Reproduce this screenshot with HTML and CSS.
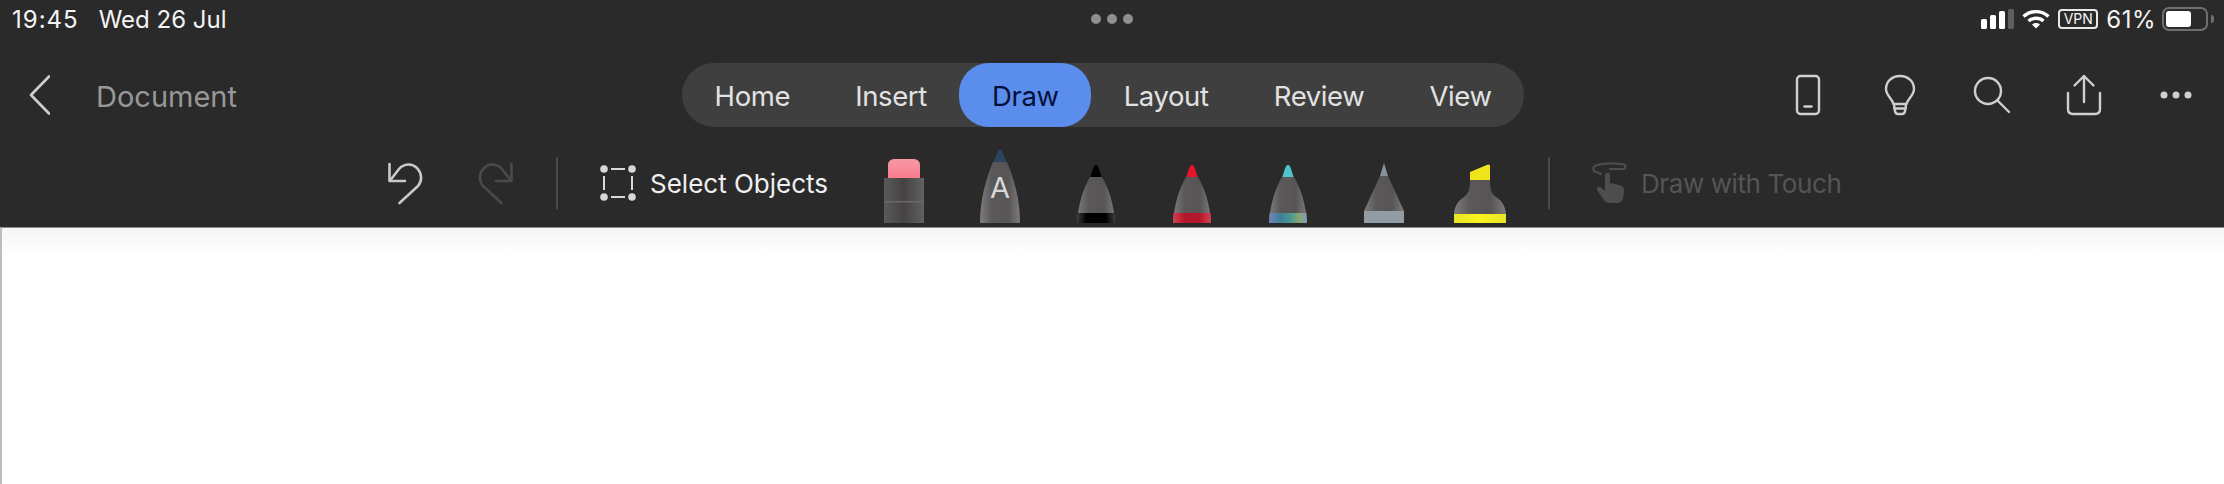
FILE: index.html
```html
<!DOCTYPE html>
<html lang="en">
<head>
    <meta charset="UTF-8">
    <title>Document</title>
    <link rel="stylesheet" href="styles.css">
</head>
<body>

    <svg class="defs" aria-hidden="true">
        <defs>
            <linearGradient id="barrel" x1="0" x2="1" y1="0" y2="0">
                <stop offset="0" stop-color="#807b7c"/>
                <stop offset="0.3" stop-color="#5a5859"/>
                <stop offset="0.7" stop-color="#565455"/>
                <stop offset="1" stop-color="#7f7a7b"/>
            </linearGradient>
            <linearGradient id="eraser-body" x1="0" x2="1" y1="0" y2="0">
                <stop offset="0" stop-color="#5c595a"/>
                <stop offset="0.5" stop-color="#444243"/>
                <stop offset="1" stop-color="#626061"/>
            </linearGradient>
            <linearGradient id="pink" x1="0" x2="0" y1="0" y2="1">
                <stop offset="0" stop-color="#f59aa5"/>
                <stop offset="1" stop-color="#fb7c8e"/>
            </linearGradient>
            <linearGradient id="ink-band" x1="0" x2="1" y1="0" y2="0">
                <stop offset="0" stop-color="#3a3a3a"/>
                <stop offset="0.25" stop-color="#000"/>
                <stop offset="0.75" stop-color="#000"/>
                <stop offset="1" stop-color="#3a3a3a"/>
            </linearGradient>
            <linearGradient id="red-band" x1="0" x2="1" y1="0" y2="0">
                <stop offset="0" stop-color="#d8404f"/>
                <stop offset="0.3" stop-color="#b2182a"/>
                <stop offset="0.7" stop-color="#b2182a"/>
                <stop offset="1" stop-color="#d8404f"/>
            </linearGradient>
            <linearGradient id="galaxy-band" x1="0" x2="1" y1="0" y2="0">
                <stop offset="0" stop-color="#6f86b5"/>
                <stop offset="0.3" stop-color="#3d7f98"/>
                <stop offset="0.6" stop-color="#4f9a90"/>
                <stop offset="0.8" stop-color="#8ea56c"/>
                <stop offset="1" stop-color="#7d9cc4"/>
            </linearGradient>
            <linearGradient id="yellow-band" x1="0" x2="1" y1="0" y2="0">
                <stop offset="0" stop-color="#e8e42a"/>
                <stop offset="0.5" stop-color="#fbf41a"/>
                <stop offset="1" stop-color="#e8e42a"/>
            </linearGradient>
        </defs>
    </svg>

    <div class="status-bar">
        <div class="status-left">
            <span class="clock">19:45</span>
            <span>Wed 26 Jul</span>
        </div>
        <div class="status-dots"><i></i><i></i><i></i></div>
        <div class="status-right">
            <svg class="signal" width="33" height="20" viewBox="0 0 33 20">
                <rect x="0" y="10" width="6" height="10" rx="1.5" fill="#fff"/>
                <rect x="9" y="6" width="6" height="14" rx="1.5" fill="#fff"/>
                <rect x="18" y="2" width="6" height="18" rx="1.5" fill="#fff"/>
                <rect x="27" y="0" width="6" height="20" rx="1.5" fill="#5e5e5e"/>
            </svg>
            <svg class="wifi" width="28" height="20" viewBox="0 0 28 20" fill="none" stroke="#fff" stroke-width="3.4">
                <path d="M1.5 7.5C8.5 1 19.5 1 26.5 7.5"/>
                <path d="M6.5 12C10.5 8.4 17.5 8.4 21.5 12"/>
                <path d="M14 19.5L10 15.6C12 13.6 16 13.6 18 15.6Z" fill="#fff" stroke="none"/>
            </svg>
            <span class="vpn">VPN</span>
            <span class="battery-level">61%</span>
            <span class="battery"><i></i></span>
            <span class="battery-nub"></span>
        </div>
    </div>

    <div class="nav-bar">
        <div class="nav-left">
            <svg width="21" height="40" viewBox="0 0 21 40" fill="none" stroke="#cfcfcf" stroke-width="2.6" stroke-linecap="round" stroke-linejoin="round">
                <path d="M20 1.5L2 20L20 38.5"/>
            </svg>
            <span class="doc-title">Document</span>
        </div>
        <div class="tabs">
            <span class="tab">Home</span>
            <span class="tab">Insert</span>
            <span class="tab active">Draw</span>
            <span class="tab">Layout</span>
            <span class="tab">Review</span>
            <span class="tab">View</span>
        </div>
        <div class="actions">
            <span class="action">
                <svg width="26" height="42" viewBox="0 0 26 42" fill="none" stroke="#cfcfcf" stroke-width="2.4" stroke-linecap="round">
                    <rect x="2" y="2" width="22" height="38" rx="3.5"/>
                    <path d="M9.500 32.500H16.500"/>
                </svg>
            </span>
            <span class="action">
                <svg width="32" height="42" viewBox="0 0 32 42" fill="none" stroke="#cfcfcf" stroke-width="2.4" stroke-linecap="round" stroke-linejoin="round">
                    <path d="M9.500 30C8.500 25 2 21.500 2 15C2 7.500 8 2 16 2C24 2 30 7.500 30 15C30 21.500 23.500 25 22.500 30Z"/>
                    <path d="M10 31L11 37C11.300 39 12.500 40 14 40H18C19.500 40 20.700 39 21 37L22 31"/>
                    <path d="M10.500 34.500H21.500"/>
                </svg>
            </span>
            <span class="action">
                <svg width="38" height="38" viewBox="0 0 38 38" fill="none" stroke="#cfcfcf" stroke-width="2.4" stroke-linecap="round">
                    <circle cx="15" cy="15" r="13"/>
                    <path d="M24.500 24.500L36 36"/>
                </svg>
            </span>
            <span class="action">
                <svg width="36" height="42" viewBox="0 0 36 42" fill="none" stroke="#cfcfcf" stroke-width="2.4" stroke-linecap="round" stroke-linejoin="round">
                    <path d="M18 28V2M8.500 11.500L18 2L27.500 11.500"/>
                    <path d="M2 19V35C2 38 4 40 7 40H29C32 40 34 38 34 35V19"/>
                </svg>
            </span>
            <span class="action">
                <svg width="32" height="8" viewBox="0 0 32 8" fill="#cfcfcf">
                    <circle cx="4" cy="4" r="3.500"/>
                    <circle cx="16" cy="4" r="3.500"/>
                    <circle cx="28" cy="4" r="3.500"/>
                </svg>
            </span>
        </div>
    </div>

    <div class="tool-bar">
        <svg class="undo" width="36" height="44" viewBox="0 0 36 44" fill="none" stroke="#c9c9c9" stroke-width="2.6" stroke-linecap="round" stroke-linejoin="round">
            <path d="M2.500 3V20H18"/>
            <path d="M3.500 19L12 8C17 2.500 25 2 30 7C35 12.500 35.500 19.500 31 25L12.500 42"/>
        </svg>
        <svg class="redo" width="36" height="44" viewBox="0 0 36 44" fill="none" stroke="#4a4a4a" stroke-width="2.6" stroke-linecap="round" stroke-linejoin="round">
            <path d="M33.500 3V20H18"/>
            <path d="M32.500 19L24 8C19 2.500 11 2 6 7C1 12.500 0.500 19.500 5 25L23.500 42"/>
        </svg>
        <span class="divider first"></span>
        <svg class="select-icon" width="36" height="36" viewBox="0 0 36 36" fill="#d8d8d8">
            <circle cx="4" cy="4" r="3.800"/>
            <circle cx="32" cy="4" r="3.800"/>
            <circle cx="4" cy="32" r="3.800"/>
            <circle cx="32" cy="32" r="3.800"/>
            <path d="M11 3H25V5H11ZM11 31H25V33H11ZM3 11H5V25H3ZM31 11H33V25H31Z"/>
        </svg>
        <span class="select-label">Select Objects</span>

        <div class="pens">
            <svg class="pen" width="96" height="76" viewBox="0 0 96 76">
                <path d="M32 31V18C32 14 35 12 39 12H57C61 12 64 14 64 18V31Z" fill="url(#pink)"/>
                <rect x="28" y="31" width="40" height="45" fill="url(#eraser-body)"/>
                <rect x="28" y="54" width="40" height="1.500" fill="#6b6869"/>
            </svg>
            <svg class="pen" width="96" height="76" viewBox="0 0 96 76">
                <path d="M41 16L46.500 3.500Q48 1 49.500 3.500L55 16Z" fill="#2b4460"/>
                <path d="M28 76C28 52 34 32 41 15H55C62 32 68 52 68 76Z" fill="url(#barrel)"/>
                <text class="pen-letter" x="48" y="51" text-anchor="middle">A</text>
            </svg>
            <svg class="pen" width="96" height="76" viewBox="0 0 96 76">
                <path d="M42 31C44 26 45 18 48 18C51 18 52 26 54 31Z" fill="#000"/>
                <path d="M29 76C30 58 35 42 42 30H54C61 42 66 58 67 76Z" fill="url(#barrel)"/>
                <path d="M29.600 66H66.400L67 76H29Z" fill="url(#ink-band)"/>
            </svg>
            <svg class="pen" width="96" height="76" viewBox="0 0 96 76">
                <path d="M42 31C44 26 45 18 48 18C51 18 52 26 54 31Z" fill="#e5162c"/>
                <path d="M29 76C30 58 35 42 42 30H54C61 42 66 58 67 76Z" fill="url(#barrel)"/>
                <path d="M29.600 66H66.400L67 76H29Z" fill="url(#red-band)"/>
            </svg>
            <svg class="pen" width="96" height="76" viewBox="0 0 96 76">
                <path d="M42 31C44 26 45 18 48 18C51 18 52 26 54 31Z" fill="#4fc3cc"/>
                <path d="M29 76C30 58 35 42 42 30H54C61 42 66 58 67 76Z" fill="url(#barrel)"/>
                <path d="M29.600 66H66.400L67 76H29Z" fill="url(#galaxy-band)"/>
            </svg>
            <svg class="pen" width="96" height="76" viewBox="0 0 96 76">
                <path d="M48 16L52 29H44Z" fill="#87919b"/>
                <path d="M28 64L44 29H52L68 64Z" fill="url(#barrel)"/>
                <rect x="28" y="64" width="40" height="12" fill="#929ca4"/>
            </svg>
            <svg class="pen" width="96" height="76" viewBox="0 0 96 76">
                <path d="M38 33V25L56 17.500Q58 17 58 19V33Z" fill="#efe51c"/>
                <path d="M22 67C23 58 26 54 32 50C37 46 38 42 38 33H58C58 42 59 46 64 50C70 54 73 58 74 67Z" fill="url(#barrel)"/>
                <rect x="22" y="67" width="52" height="9" fill="url(#yellow-band)"/>
            </svg>
        </div>

        <span class="divider second"></span>
        <svg class="touch-icon" width="36" height="42" viewBox="0 0 36 42" fill="none">
            <path d="M18 7H31C34.500 7 34.500 2 30 2C22 1 8 1.500 3 4C0 5.500 1 9 4 10L9 12" stroke="#4d4d4d" stroke-width="2.200" stroke-linecap="round"/>
            <path d="M13 13C13 10 18 10 18 13V21L27 23C31 24 32.500 26 32 30L31 36C30.500 39 28 41 25 41H18C15 41 13 40 11.500 37.500L5 28C4 25.500 7 23.500 9 25.500L13 29Z" fill="#4d4d4d"/>
        </svg>
        <span class="touch-label">Draw with Touch</span>
    </div>

    <div class="page-canvas"></div>

</body>
</html>
```

FILE: styles.css
```css
*{
    margin: 0;
    padding: 0;
    box-sizing: border-box;
}

body{
    width: 2224px;
    height: 484px;
    overflow: hidden;
    display: flex;
    flex-direction: column;
    background-color: #2a2a2a;
    font-family: Inter, "Liberation Sans", sans-serif;
}

.defs{
    width: 0;
    height: 0;
    flex: none;
}

/* status bar */
.status-bar{
    height: 38px;
    flex: none;
    display: grid;
    grid-template-columns: 1fr auto 1fr;
    align-items: center;
    color: #f4f4f4;
    font-size: 24px;
}

.status-left{
    display: flex;
    gap: 20px;
    padding-left: 12px;
}

.clock{
    letter-spacing: 1px;
}

.status-dots{
    display: flex;
    gap: 6px;
}

.status-dots i{
    width: 10px;
    height: 10px;
    border-radius: 50%;
    background-color: #8f8f8f;
}

.status-right{
    display: flex;
    align-items: center;
    justify-content: flex-end;
    padding-right: 10px;
}

.wifi{
    margin-left: 8px;
}

.vpn{
    margin-left: 8px;
    width: 40px;
    height: 20px;
    border: 2px solid #e8e8e8;
    border-radius: 4px;
    font-size: 14px;
    line-height: 16px;
    text-align: center;
}

.battery-level{
    margin-left: 8px;
    letter-spacing: 0.5px;
}

.battery{
    margin-left: 6px;
    width: 46px;
    height: 24px;
    padding: 2px;
    border: 2px solid #6f6f6f;
    border-radius: 7px;
}

.battery i{
    display: block;
    width: 25px;
    height: 16px;
    border-radius: 3px;
    background-color: #fff;
}

.battery-nub{
    margin-left: 3px;
    width: 3px;
    height: 8px;
    border-radius: 0 3px 3px 0;
    background-color: #6f6f6f;
}

/* title row */
.nav-bar{
    height: 64px;
    margin-top: 25px;
    flex: none;
    display: grid;
    grid-template-columns: 682px auto 1fr;
    align-items: center;
}

.nav-left{
    display: flex;
    align-items: center;
    padding-left: 29px;
}

.doc-title{
    margin-left: 46px;
    padding-top: 2px;
    color: #989898;
    font-size: 29px;
}

.tabs{
    height: 64px;
    display: flex;
    border-radius: 32px;
    background-color: #3f3f3f;
}

.tab{
    padding: 2px 32.6px 0;
    display: flex;
    align-items: center;
    border-radius: 30px;
    color: #e2e2e2;
    font-size: 27.5px;
    letter-spacing: -0.4px;
}

.tab.active{
    background-color: #5b8ded;
    color: #05103a;
}

.actions{
    display: flex;
    justify-content: flex-end;
    padding-right: 2px;
}

.action{
    width: 92px;
    height: 64px;
    display: flex;
    align-items: center;
    justify-content: center;
}

/* drawing tools */
.tool-bar{
    height: 88px;
    margin-top: 12px;
    flex: none;
    display: flex;
    align-items: center;
    padding-left: 387px;
    font-size: 26px;
}

.redo{
    margin-left: 55px;
}

.divider{
    width: 2px;
    height: 52px;
    background-color: #4a4a4a;
}

.divider.first{
    margin-left: 42px;
}

.select-icon{
    margin-left: 42px;
}

.select-label{
    width: 176px;
    margin-left: 14px;
    color: #efefef;
    white-space: nowrap;
}

.pens{
    margin-left: 30px;
    align-self: flex-end;
    display: flex;
    padding-bottom: 4px;
}

.pen-letter{
    fill: #d8d8d8;
    font-size: 29px;
}

.divider.second{
    margin-left: 20px;
}

.touch-icon{
    margin-left: 42px;
}

.touch-label{
    margin-left: 13px;
    color: #555;
    letter-spacing: -0.4px;
    white-space: nowrap;
}

/* document page */
.page-canvas{
    flex: 1;
    border-top: 1px solid #8a8a8a;
    border-left: 2px solid #bdbdbd;
    background: linear-gradient(#f6f6f6, #fff 30px);
}
```
